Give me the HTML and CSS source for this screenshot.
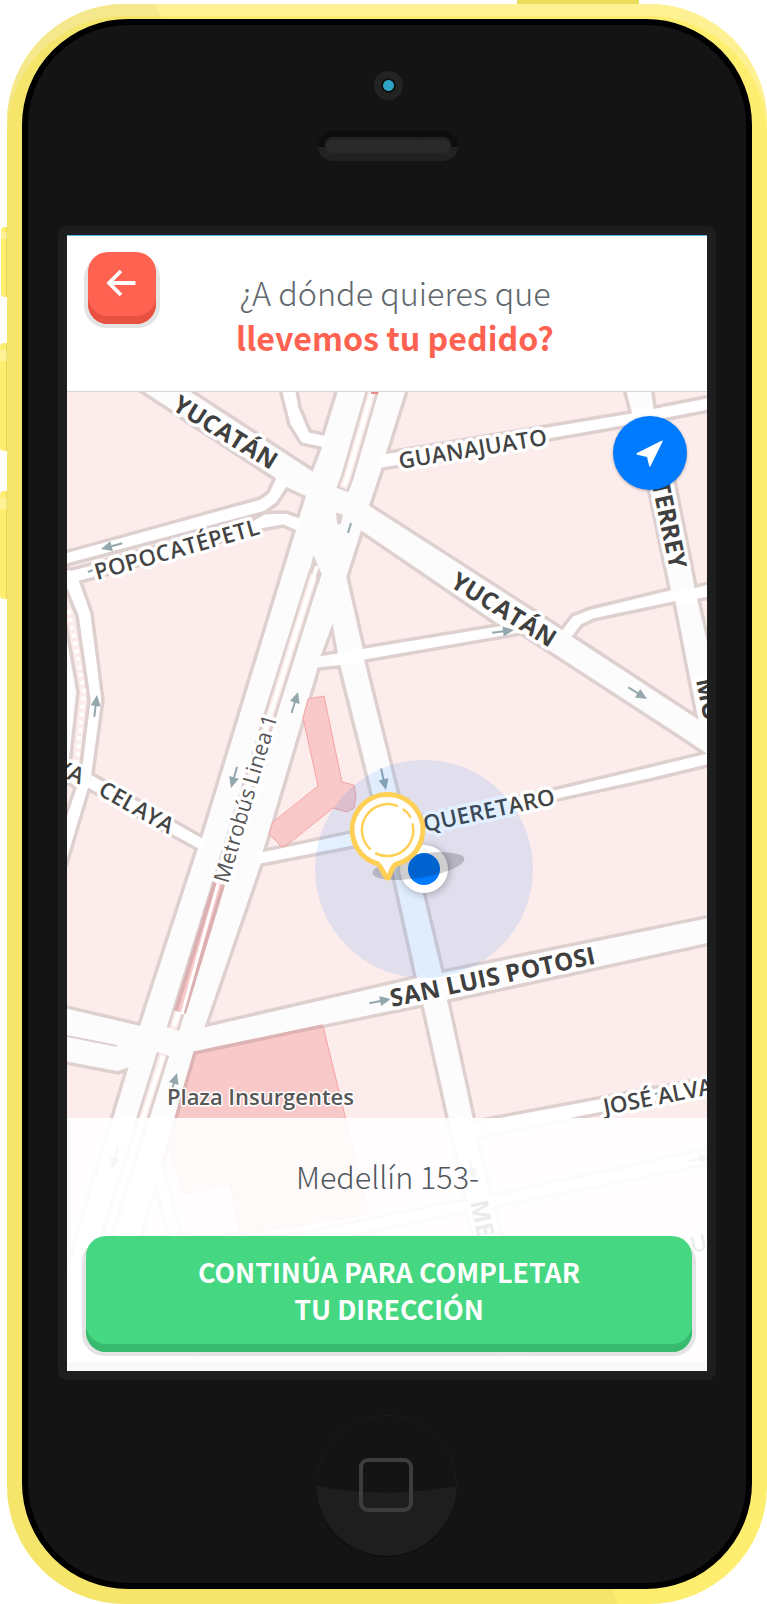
FILE: index.html
```html
<!DOCTYPE html>
<html lang="es">
<head>
<meta charset="utf-8">
<title>Dirección de entrega</title>
<link rel="stylesheet" href="styles.css">
</head>
<body>
<div class="device">
  <span class="key key-power"></span>
  <span class="key key-mute"></span>
  <span class="key key-up"></span>
  <span class="key key-down"></span>
  <div class="shell">
    <div class="glass">
      <div class="top">
        <div class="camera"></div>
        <div class="speaker"><div class="grille"></div></div>
      </div>
      <div class="bezel">
        <main class="screen">
          <header class="header">
            <button class="back" aria-label="Volver">
              <svg width="30" height="28" viewBox="0 0 30 28"><path d="M15 2L3 14L15 26M2.500 14H29.500" fill="none" stroke="#fff" stroke-width="3.800"/></svg>
            </button>
            <h1 class="title"><span class="ask">¿A dónde quieres que</span><strong>llevemos tu pedido?</strong></h1>
          </header>
          <section class="map">
            <svg class="tiles" width="640" height="970" viewBox="67 392 640 970">
              <defs>
                <g id="arrow"><path d="M-22 0H-8" stroke="#93a7ad" stroke-width="2"/><path d="M0 0L-11 -5V5Z" fill="#93a7ad"/></g>
              </defs>
              <rect x="67" y="392" width="640" height="970" fill="#fcfcfc"/>
              <g class="minor">
                <path d="M60 560L258 506L274 495L282 480M60 582L264 521L284 519L300 525M288 385L294 415L306 438L325 442M380 461L715 402M330 661L510 628M568 632L580 620L715 590M260 858L370 835M410 824L715 756M90 781L205 844M72 575L85 612L96 700L80 790L60 860M480 1129L715 1083"/>
              </g>
              <g class="block">
                <path d="M50 380H122L140 391L274 479L268 492L260 498L50 556Z"/>
                <path d="M287 489L304 497L298 516L286 512L265 512.500L277 504Z"/>
                <path d="M265 512.500L60 567L72 569L252 520Z"/>
                <path d="M81 582L262 530L283 526L294 531L201 836L93 774L103 700L92 613Z"/>
                <path d="M60 575L77 616L89 700L80 772L69 775L78 692L66 625L60 625Z"/>
                <path d="M89 790L196 849L139 1024L50 1003V905L67 864Z"/>
                <path d="M50 770L75 788L50 860Z"/>
                <path d="M50 1060L118 1073L126 1070L60 1290H50Z"/>
                <path d="M186 387L312 469L320 448L301 444L289 425L279 385Z"/>
                <path d="M296 385L300 407L310 431L323 434L338 385Z"/>
                <path d="M409 385L388 452L630 412L623 385Z"/>
                <path d="M652 385L655 407L720 394V385Z"/>
                <path d="M383 469L371 505L562 628L572 615L590 608L669 589L635 425Z"/>
                <path d="M663 420L720 409V580L696 586Z"/>
                <path d="M574 636L582 626L594 620L674 603L696 716Z"/>
                <path d="M699 600L720 596V690Z"/>
                <path d="M362 533L348 577L364 647L497 625Z"/>
                <path d="M366 661L521 634L673 733L703 753L557 788L405 819Z"/>
                <path d="M332 630L336 652L323 654Z"/>
                <path d="M319 669L339 667L379 826L265 850Z"/>
                <path d="M262 865L385 841L415 977L207 1025Z"/>
                <path d="M410 832L650 780L720 763V914L443 971Z"/>
                <path d="M195 1053L422 1006L465 1199L290 1235L181 1236L163 1165Z"/>
                <path d="M155 1190L170 1237H141Z"/>
                <path d="M449 1001L720 942V1075L475 1121Z"/>
                <path d="M478 1138L720 1090V1146L492 1195Z"/>
                <path d="M495 1207L720 1162V1370H536Z"/>
                <path d="M468 1212L300 1246L194 1354V1370H505Z"/>
                <path d="M338 515L341 516L339 524Z"/>
              </g>
              <path d="M67 1036L117 1046" stroke="#dfd0d0" stroke-width="2"/>
              <path d="M69 610L84 692L76 772" fill="none" stroke="#fff" stroke-width="4" stroke-dasharray="4 4"/>
              <g class="park">
                <path d="M308 699L324 696L342 782L354 785L356 797L354 808L347 812L333 808L287 845L282 847L269 834L273 822L318 786L303 718Z"/>
                <path d="M195 1053L323 1026L369 1214L240 1235L230 1184L183 1194L168 1147Z"/>
              </g>
              <path d="M163 1163L195 1053L323 1026" fill="none" stroke="#deb3b3" stroke-width="3.500"/>
              <g fill="none">
                <g stroke="#dfd0d0" stroke-width="13"><path d="M374 385L347 478L342.500 490M315.500 571L271 712L218 884L173 1029M163 1054L143 1118L95 1275"/></g>
                <g stroke="#fdecec" stroke-width="7.500"><path d="M374 385L347 478L343 488M315.500 570L271 712L218 884L173 1029M163 1054L143 1118L95 1275"/></g>
                <path d="M313.500 555L321.700 574L318.500 585L315 575L309 573Z" fill="#dfd0d0"/>
                <g stroke="#fff" stroke-width="4"><path d="M374 385L347 478L344 486M317 566L271 712L218 884L174 1026M163 1056L143 1118L95 1275"/></g>
                <path d="M219 884L180 1012" stroke="#dcb0b0" stroke-width="12.500"/>
                <path d="M219 884L180 1012" stroke="#f9c8c8" stroke-width="5"/>
                <path d="M218 884L182 1014" stroke="#fff" stroke-width="3"/>
              </g>
              <path d="M371 392.500H378" stroke="#e58e8e" stroke-width="3"/>

              <use href="#arrow" transform="translate(101 549) rotate(165)"/>
              <use href="#arrow" transform="translate(97 695) rotate(-83)"/>
              <use href="#arrow" transform="translate(298 692) rotate(-73)"/>
              <path d="M348 533L351 523" stroke="#93a7ad" stroke-width="2"/>
              <use href="#arrow" transform="translate(514 630) rotate(-7)"/>
              <use href="#arrow" transform="translate(647 699) rotate(32)"/>
              <use href="#arrow" transform="translate(231 788) rotate(106)"/>
              <use href="#arrow" transform="translate(386 790) rotate(77)"/>
              <use href="#arrow" transform="translate(391 999) rotate(-11)"/>
              <use href="#arrow" transform="translate(177 1073) rotate(-73)"/>
              <use href="#arrow" transform="translate(112 1169) rotate(106)"/>
              <use href="#arrow" transform="translate(475 1180) rotate(75)"/>
              <use href="#arrow" transform="translate(710 1157) rotate(-11)"/>
              <path d="M88 572L93 570M655 1094L659 1093" stroke="#93a7ad" stroke-width="2"/>

              <g class="street">
                <text class="main" transform="translate(171 409) rotate(31.600)" textLength="117">YUCATÁN</text>
                <text class="main" transform="translate(449 586) rotate(31.600)" textLength="118">YUCATÁN</text>
                <text transform="translate(400 469) rotate(-9.400)" textLength="150">GUANAJUATO</text>
                <text transform="translate(97 580) rotate(-15.700)" textLength="170">POPOCATÉPETL</text>
                <text transform="translate(97 794) rotate(29.500)" textLength="82">CELAYA</text>
                <text transform="translate(54 773) rotate(24)">YA</text>
                <text class="rail" transform="translate(228 884) rotate(-73.500)" textLength="174">Metrobús Linea 1</text>
                <text transform="translate(425 832) rotate(-12)" textLength="134">QUERETARO</text>
                <text class="main" transform="translate(392 1007) rotate(-12)" textLength="209">SAN LUIS POTOSI</text>
                <text class="main" transform="translate(670 570) rotate(78)" text-anchor="end">MONTERREY</text>
                <text class="main" transform="translate(696 680) rotate(79)">MO</text>
                <text transform="translate(605 1115) rotate(-11)">JOSÉ ALVARADO</text>
                <text class="main" transform="translate(470 1202) rotate(78)">MEDELLIN</text>
                <text transform="translate(692 1253) rotate(-12)">UR</text>
                <text class="place" x="167" y="1105" textLength="187">Plaza Insurgentes</text>
              </g>

              <circle cx="424" cy="869" r="109" fill="#007aff" fill-opacity=".11"/>
              <circle class="dot-ring" cx="424" cy="869" r="24" fill="#fff"/>
              <circle cx="424" cy="869" r="16" fill="#007aff"/>
              <ellipse cx="418.500" cy="866" rx="46.500" ry="12" transform="rotate(-9 418.500 866)" fill-opacity=".19"/>
              <path d="M377.500 863.700A35.300 35.300 0 1 1 397.500 863.700Q394 864.500 392 869L388.800 877Q387.500 879.500 386 877L381 868Q379 864.500 377.500 863.700Z" fill="#fff" stroke="#ffcf56" stroke-width="5"/>
              <g fill="none" stroke="#ffcf56" stroke-width="2.500" stroke-linecap="round">
                <path d="M412.700 824.500A26 26 0 0 1 376 853.500M370 849A26 26 0 0 1 397 805.800M403.500 809.500Q408 812.500 410.300 817"/>
              </g>
            </svg>
            <button class="locate" aria-label="Mi ubicación">
              <svg width="28" height="28" viewBox="0 0 28 28"><path d="M25.500 .700Q27.300 0 26.500 1.800L14.800 25.500Q13.500 28 13.100 25.500L11 17L1.300 14.700Q-.500 14 1.500 12.800Z" fill="#fff"/></svg>
            </button>
            <div class="panel">
              <p class="address">Medellín 153-</p>
              <button class="cta">CONTINÚA PARA COMPLETAR<br>TU DIRECCIÓN</button>
            </div>
          </section>
        </main>
      </div>
      <div class="home"><span class="home-icon"></span></div>
    </div>
  </div>
</div>
</body>
</html>
```

FILE: styles.css
```css
* { box-sizing: border-box; }

body {
  margin: 0;
  background: #fff;
  font-family: "Noto Sans CJK SC", "Noto Sans", sans-serif;
  overflow: hidden;
}

button { border: 0; padding: 0; font-family: inherit; }

.device {
  position: relative;
  width: 767px;
  height: 1604px;
  padding: 4px 0 0 7px;
}

/* Hardware keys on the edge of the case */
.key {
  position: absolute;
  background: linear-gradient(90deg, transparent 70%, #e5d65c 70%), #feee70;
  border-radius: 4px 0 0 4px;
}
.key-power { left: 517px; top: 0; width: 122px; height: 5px; background: #eadd5d; border-radius: 0; }
.key-mute { left: 1px; top: 227px; width: 7px; height: 70px; }
.key-up { left: 0; top: 343px; width: 8px; height: 108px; }
.key-down { left: 0; top: 491px; width: 8px; height: 108px; }

.key-mute::after, .key-up::after, .key-down::after {
  content: "";
  display: block;
  height: 11px;
  margin-top: 7px;
  background: rgba(255, 255, 255, .25);
}
.key-mute::after { height: 7px; margin-top: 5px; }

.shell {
  position: relative;
  width: 760px;
  height: 1600px;
  padding: 15px;
  background: #feee70;
  box-shadow: inset 0 12px #fef193;
  border-radius: 118px;
  overflow: hidden;
}
.shell::before {
  content: "";
  position: absolute;
  inset: 0;
  background: rgba(130, 120, 60, .075);
  clip-path: polygon(0 0, 149px 0, 154px 15px, 606px 1585px, 610px 1600px, 0 1600px);
}

.glass {
  position: relative;
  height: 1570px;
  border: 6px solid #000;
  border-radius: 106px;
  background: #141414;
  display: flex;
  flex-direction: column;
  align-items: center;
}

.top {
  height: 201px;
  display: flex;
  flex-direction: column;
  align-items: center;
  padding: 46px 0 0 3px;
}
.camera {
  width: 29px;
  height: 29px;
  border-radius: 50%;
  background: radial-gradient(circle, #2fa3c5 5px, #101010 5.800px, #101010 7px, #232323 7.600px);
}
.speaker {
  width: 140px;
  height: 30px;
  margin: 31px 2px 0 0;
  padding: 6px 7px 8px;
  border-radius: 15px;
  background: linear-gradient(#0e0e0e 53%, #222 53%);
}
.grille {
  height: 16px;
  border-radius: 8px;
  background: repeating-linear-gradient(135deg, #262626 0 1.400px, #2e2e2e 1.400px 2.800px);
  box-shadow: inset 0 3px rgba(0, 0, 0, .18);
}

.bezel {
  width: 658px;
  height: 1154px;
  padding: 9px;
  border-radius: 9px;
  background: #1e1e1e;
}
.screen {
  height: 1136px;
  display: flex;
  flex-direction: column;
  background: #f9f9f9;
  border-top: 1px solid #5cb8e8;
}

.header {
  height: 156px;
  display: flex;
  align-items: flex-start;
  padding: 16px 21px 0;
  background: #fff;
  border-bottom: 1px solid #d9d6d6;
}
.back {
  position: relative;
  z-index: 0;
  width: 68px;
  height: 72px;
  padding: 0 3px 6px 0;
  border-radius: 20px;
  background: none;
}
.back::before, .cta::before {
  content: "";
  position: absolute;
  z-index: -1;
  inset: 4px -4px -4px;
  border-radius: 22px;
  background: #e4e4e4;
}
.back::after, .cta::after {
  content: "";
  position: absolute;
  z-index: -1;
  inset: 0;
  border-radius: 20px;
  background: #ff6250;
  box-shadow: inset 0 -8px #e85140;
}
.title {
  margin: 18px 0 0;
  flex: 1;
  padding-right: 52px;
  text-align: center;
  font-size: 32.300px;
  line-height: 45px;
  font-weight: 300;
  color: #5f676d;
}
.title span, .title strong { display: block; white-space: nowrap; }
.title strong { font-size: 32.200px; font-weight: 700; color: #ff6250; }

.map {
  position: relative;
  height: 970px;
}
.tiles { display: block; }
.minor { fill: none; stroke: #fff; stroke-width: 14px; }
.block { fill: #fdecec; stroke: #dfd0d0; stroke-width: 3.500px; }
.park { fill: #f9c8c8; stroke: #f4a4a4; stroke-width: 1px; }
.street {
  font-family: "Open Sans", "Noto Sans", sans-serif;
  font-size: 22.500px;
  font-weight: 600;
  fill: #444;
  stroke: #fff;
  stroke-width: 7px;
  stroke-linejoin: round;
  paint-order: stroke;
}
.main { font-size: 24.500px; font-weight: 700; fill: #404040; }
.rail { fill: #555; font-size: 21.500px; font-weight: 500; }
.place { fill: #575757; font-size: 22px; font-weight: 600; stroke-width: 3px; }
.dot-ring { filter: drop-shadow(1px 1px 4px rgba(0, 0, 0, .3)); }

.locate {
  position: absolute;
  right: 20px;
  top: 24px;
  width: 74px;
  height: 74px;
  border-radius: 50%;
  background: #007aff;
  box-shadow: 0 1px 3px rgba(0, 0, 0, .3);
  display: flex;
  align-items: center;
  justify-content: center;
  padding: 1px 1px 0 0;
}

.panel {
  position: absolute;
  left: 0;
  right: 0;
  bottom: 0;
  height: 244px;
  padding: 35px 15px 0 19px;
  background: rgba(255, 255, 255, .9);
}
.address {
  margin: 0;
  height: 83px;
  padding-right: 3px;
  text-align: center;
  font-size: 30.500px;
  line-height: 46px;
  font-weight: 300;
  color: #4f575d;
}
.cta {
  position: relative;
  z-index: 0;
  display: block;
  width: 606px;
  height: 116px;
  padding-bottom: 9px;
  color: #fff;
  font-size: 26.850px;
  font-weight: 700;
  line-height: 37px;
  background: none;
}
.cta::after { background: #46d782; box-shadow: inset 0 -8px #38bb6e; }

/* Home key */
.home {
  width: 141px;
  height: 141px;
  margin: 35px 2px 0 0;
  border-radius: 50%;
  border: 1px solid #1b1b1b;
  background: radial-gradient(ellipse 150px 60px at 50% 17px, #141414 99%, #1e1e1e 100%);
  box-shadow: 0 1px #0c0c0c;
  display: flex;
  align-items: center;
  justify-content: center;
}
.home-icon {
  width: 54px;
  height: 54px;
  margin-top: -1px;
  border: 4px solid #3d3d3d;
  border-radius: 9px;
}
```
